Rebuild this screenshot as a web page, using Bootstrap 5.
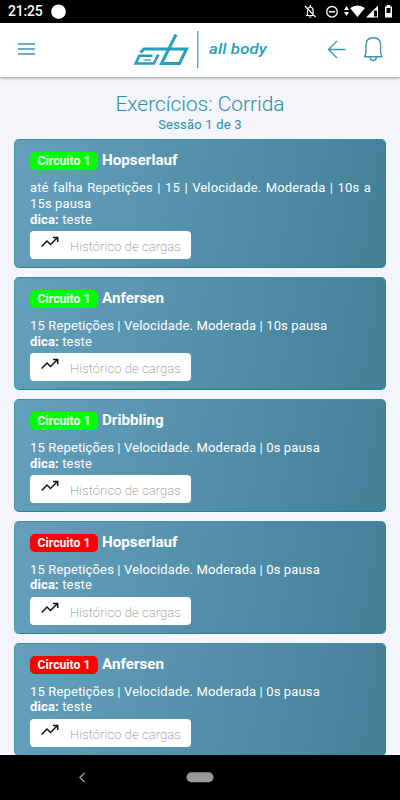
<!DOCTYPE html>
<html lang="pt-BR">
<head>
<meta charset="utf-8">
<meta name="viewport" content="width=device-width, initial-scale=1">
<title>All Body</title>
<link rel="stylesheet" href="https://cdn.jsdelivr.net/npm/bootstrap@5.3.0/dist/css/bootstrap.min.css">
<style>
body{font-family:Roboto,"Liberation Sans",sans-serif;font-size:13px;line-height:15.6px;letter-spacing:.14px;background:#f4f5fa;height:800px;overflow:hidden}
.status{height:23px;flex:none}
.clock{font-size:14px;font-weight:500;letter-spacing:-.2px;margin-top:1px}
.topbar{height:54px;flex:none;box-shadow:0 1px 3px rgba(0,0,0,.4);z-index:2}
.page{padding:15px 14px 0;min-height:0}
.heading{font-size:20.9px;font-weight:300;line-height:24px;color:#2a8fb0;letter-spacing:0}
.session{color:#2a8fb0;line-height:16px;margin-bottom:6.4px;padding-top:1px;letter-spacing:.2px}
.exercise{background:linear-gradient(100deg,#64a0bc,#438098);border:1px solid #2581a0;border-left-color:#5094b0;border-top-color:#3d8dab;border-radius:5px;padding:11px 14px 8.3px 15px;margin-bottom:8.9px;color:#fff}
.head-row{height:19px;margin-bottom:10px;gap:4px}
.tag{font-size:12.2px;font-weight:700;letter-spacing:0;line-height:18px;height:18px;width:68px;border-radius:5px;text-align:center;margin-top:1px}
.tag-go{background:#0f0}.tag-stop{background:#f00}
.name{font-size:15.2px;font-weight:700;letter-spacing:0}
.desc{text-align:justify}
.history{width:161px;height:27.6px;border-radius:4px;margin-top:4px;padding-left:11px;color:#8c8c8c;font-weight:200;letter-spacing:.1px;border:0}
.history span{margin:4px 0 0 11px}
.history svg{margin-top:-5px}
.sysnav{height:45px;flex:none;z-index:2}
</style>
<script src="https://cdn.jsdelivr.net/npm/bootstrap@5.3.0/dist/js/bootstrap.bundle.min.js"></script>
</head>
<body class="d-flex flex-column">
<div class="status bg-black text-white d-flex align-items-center justify-content-between">
 <span class="d-flex align-items-center ps-2"><span class="clock">21:25</span><svg class="ms-2" width="20" height="23"><circle cx="7.500" cy="11.700" r="7.300" fill="#fff"/></svg></span>
 <svg width="100" height="23" viewBox="300 0 100 23" fill="none" stroke="#fff">
  <path d="M305 6l10.500 11M306 15.500h8M307.500 15V10.500q0-3 2.800-3.500 2.800 .5 2.800 3.500v5M310.300 5v2M309 17h2.500" stroke-width="1.200"/>
  <circle cx="332" cy="11.800" r="5.300" stroke-width="1.300"/><path d="M329 11.800h6" stroke-width="1.500"/>
  <path d="M344 10l2.500-4 2.500 4zM344 12l2.500 4 2.500-4zM350 8q7.500-5 15 0l-7.500 9z" fill="#fff" stroke="none"/>
  <path d="M366 17.500L378 5.500V17.500z" fill="#fff" stroke="none"/><path d="M374 10.500h3v6h-3z" fill="#000" stroke="none"/>
  <path d="M385 6.500h1.700V5h3.600v1.500h1.700v11h-7z" fill="#fff" stroke="none"/><path d="M386.500 8h4v5h-4z" fill="#000" stroke="none"/>
 </svg>
</div>
<nav class="topbar bg-white d-flex align-items-center position-relative">
 <svg width="400" height="54" viewBox="0 23 400 54" fill="none" stroke="#3d94b3">
  <path d="M18 44h17M18 49h17M18 54h17" stroke-width="1.600"/>
  <g stroke="#24a0bc">
   <path d="M176 34.500L161.500 63.500H179.500L186.500 49H144l-3.500 3.500" stroke-width="3"/>
   <path d="M158.500 54.500L153.800 63.500H135.700L139.300 55.800H152.500" stroke-width="2.600"/>
   <path d="M143.500 60h7.500" stroke-width="1.200"/>
  </g>
  <path d="M197.800 31v37" stroke="#2c9ab8" stroke-width="1.200"/>
  <text x="209" y="54" textLength="58" lengthAdjust="spacingAndGlyphs" fill="#24a0bc" stroke="none" font-family="Roboto,sans-serif" font-size="14.500" font-weight="500" font-style="italic">all body</text>
  <path d="M345.500 49.500H328.500M337 41l-8.500 8.500L337 58" stroke-width="1.400"/>
  <path d="M366 53V45q0-7.200 7.300-7.200T380.600 45v8l1.400 3.700H364.600zM370.300 57.200q0 3.300 3 3.300t3-3.300" stroke-width="1.400" stroke-linejoin="round"/>
 </svg>
</nav>
<main class="page flex-grow-1 overflow-hidden">
 <h1 class="heading text-center mb-0">Exercícios: Corrida</h1>
 <div class="session text-center">Sessão 1 de 3</div>
 <section id="list"></section>
</main>
<footer class="sysnav bg-black">
 <svg width="400" height="45"><path d="M84.500 18l-4.500 4.500 4.500 4.500" fill="none" stroke="#999" stroke-width="1.400"/><rect x="186.500" y="17.300" width="27" height="10" rx="5" fill="#999"/></svg>
</footer>
<script>
const exercises=[
 ['go','Hopserlauf','até falha Repetições | 15 | Velocidade. Moderada | 10s a 15s pausa'],
 ['go','Anfersen','15 Repetições | Velocidade. Moderada | 10s pausa'],
 ['go','Dribbling','15 Repetições | Velocidade. Moderada | 0s pausa'],
 ['stop','Hopserlauf','15 Repetições | Velocidade. Moderada | 0s pausa'],
 ['stop','Anfersen','15 Repetições | Velocidade. Moderada | 0s pausa']];
document.getElementById('list').innerHTML=exercises.map(([state,name,desc])=>`
<article class="exercise">
 <div class="head-row d-flex align-items-center"><span class="tag tag-${state}">Circuito 1</span><span class="name">${name}</span></div>
 <div class="desc">${desc}</div>
 <div><b>dica:</b> teste</div>
 <button class="history bg-white d-flex align-items-center"><svg width="18" height="12" fill="none" stroke="#111" stroke-width="1.500"><path d="M.7 10.500L6 5l3.500 3.500L16 2M12 1.500h4.700v4.500"/></svg><span>Histórico de cargas</span></button>
</article>`).join('');
</script>
</body>
</html>
